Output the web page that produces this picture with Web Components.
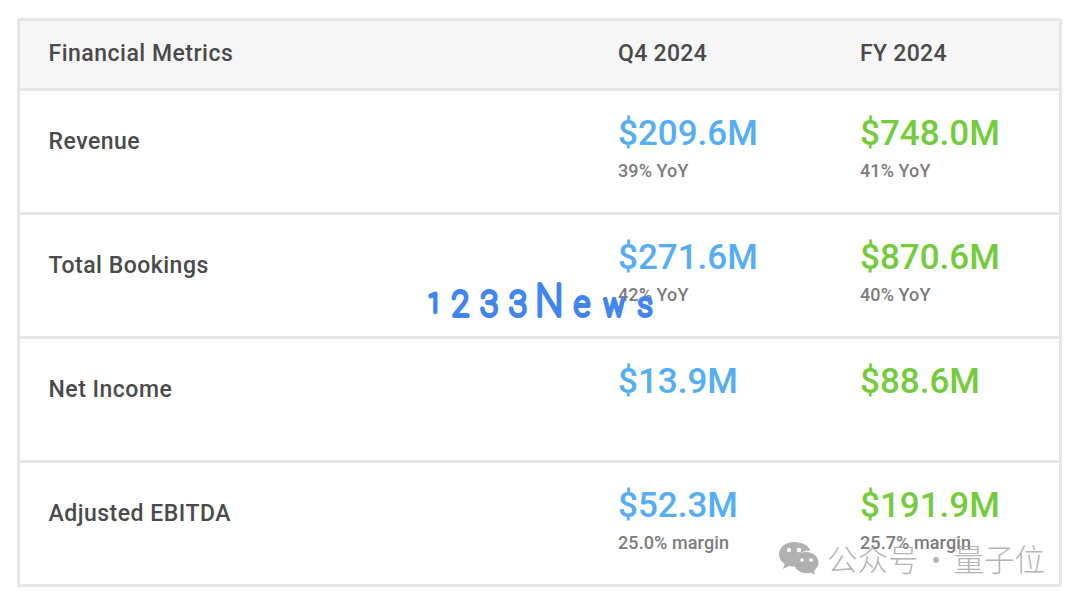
<!DOCTYPE html>
<html>
<head>
<meta charset="utf-8">
<title>Financial Metrics</title>
<style>
  html, body { margin: 0; background: #fff; }
  body { width: 1080px; height: 602px; overflow: hidden; position: relative; font-family: Roboto, "Liberation Sans", sans-serif; }
</style>
</head>
<body>
<metrics-table>
  <metric-row header label="Financial Metrics" q="Q4 2024" fy="FY 2024"></metric-row>
  <metric-row label="Revenue" q="$209.6M" qsub="39% YoY" fy="$748.0M" fysub="41% YoY"></metric-row>
  <metric-row label="Total Bookings" q="$271.6M" qsub="42% YoY" fy="$870.6M" fysub="40% YoY"></metric-row>
  <metric-row label="Net Income" q="$13.9M" fy="$88.6M"></metric-row>
  <metric-row last label="Adjusted EBITDA" q="$52.3M" qsub="25.0% margin" fy="$191.9M" fysub="25.7% margin"></metric-row>
</metrics-table>
<news-mark></news-mark>
<wechat-mark></wechat-mark>

<script>
class MetricsTable extends HTMLElement {
  constructor() {
    super();
    this.attachShadow({ mode: 'open' });
  }
  connectedCallback() {
    this.shadowRoot.innerHTML = `
      <style>
        :host { display: block; margin: 18px 0 0 17px; border: 3px solid #e6e6e6; border-radius: 2px; width: 1039px; }
      </style>
      <slot></slot>
    `;
  }
}

class MetricRow extends HTMLElement {
  constructor() {
    super();
    this.attachShadow({ mode: 'open' });
  }
  connectedCallback() {
    const a = (n) => this.getAttribute(n) || '';
    const isHead = this.hasAttribute('header');
    const cell = (val, sub, cls) => isHead
      ? `<div class="head">${val}</div>`
      : `<div class="val ${cls}">${val}</div>${sub ? `<div class="sub">${sub}</div>` : ''}`;
    this.shadowRoot.innerHTML = `
      <style>
        :host {
          display: grid; grid-template-columns: 570px 242px 1fr;
          height: 121px;
          border-bottom: 3px solid #e6e6e6;
          color: #4a4a4a;
        }
        :host([header]) { height: 67px; background: #f6f6f6; }
        :host([last]) { border-bottom: 0; }
        .c { padding-left: 28px; }
        .label { font-size: 23px; font-weight: 500; letter-spacing: .5px; padding-top: 37px; line-height: 28px; padding-left: 28.5px; }
        .head { font-size: 23px; font-weight: 500; letter-spacing: .3px; line-height: 28px; padding-top: 19px; }
        :host([header]) .label { padding-top: 19px; }
        .val { font-size: 35px; font-weight: 500; line-height: 42px; margin-top: 22px; }
        .blue { color: #55aef5; }
        .green { color: #74cc3c; }
        .sub { font-size: 18px; font-weight: 500; letter-spacing: .1px; line-height: 22px; margin-top: 5px; color: #7c7c7c; }
      </style>
      <div class="c label">${a('label')}</div>
      <div class="c">${cell(a('q'), a('qsub'), 'blue')}</div>
      <div class="c">${cell(a('fy'), a('fysub'), 'green')}</div>
    `;
  }
}

class NewsMark extends HTMLElement {
  constructor() {
    super();
    this.attachShadow({ mode: 'open' });
  }
  connectedCallback() {
    // x values are divided by the .9 squeeze on the group
    this.shadowRoot.innerHTML = `
      <style>
        :host { position: absolute; left: 420px; top: 276px; display: block; width: 245px; height: 50px; }
        svg { display: block; overflow: visible; }
        text { font-family: Roboto, sans-serif; font-weight: 100; fill: #3f86f4; stroke: #3f86f4; stroke-width: 4px; stroke-linejoin: round; stroke-linecap: round; }
      </style>
      <svg width="245" height="50" viewBox="0 0 245 50">
        <g transform="scale(.9 1)">
          <text><tspan x="9" y="36" font-size="26">1</tspan><tspan x="35" y="40" font-size="36">2</tspan><tspan x="67" y="40" font-size="36">3</tspan><tspan x="99" y="40" font-size="36">3</tspan><tspan x="128" y="40" font-size="44">N</tspan><tspan x="171" y="40" font-size="35">e</tspan><tspan x="204" y="40" font-size="31">w</tspan><tspan x="242" y="40" font-size="33">s</tspan></text>
        </g>
      </svg>
    `;
  }
}

class WechatMark extends HTMLElement {
  constructor() {
    super();
    this.attachShadow({ mode: 'open' });
  }
  connectedCallback() {
    this.shadowRoot.innerHTML = `
      <style>
        :host { position: absolute; left: 778px; top: 538px; display: flex; align-items: center; gap: 8px; height: 40px;
          color: rgba(160,160,160,.8); font-family: "Noto Sans CJK SC", sans-serif; font-size: 30.5px; font-weight: 300; white-space: nowrap; }
        svg { display: block; }
        .dot { display: inline-block; width: 35px; text-align: center; font-weight: 300; }
      </style>
      <svg width="41" height="36" viewBox="0 0 41 36">
        <path fill="#b0b0b0" d="M16 2C7.700 2 1 7.500 1 14.300c0 3.900 2.200 7.300 5.700 9.600L5 29l6-3.100c1.600.5 3.300.8 5 .8.500 0 1 0 1.500-.1-.4-1.200-.6-2.400-.6-3.700 0-7 6.300-12.500 14.400-12.500.4 0 .8 0 1.200.1C30.600 5.500 23.900 2 16 2z"/>
        <path fill="#b0b0b0" d="M40.500 22.600c0-5.900-5.600-10.600-12.200-10.600-7 0-12.300 4.700-12.300 10.600s5.300 10.600 12.300 10.600c1.400 0 2.800-.2 4.100-.6l4.700 2.500-1.300-4.200c2.900-2.100 4.700-5 4.700-8.300z"/>
        <circle cx="11" cy="10" r="2.200" fill="#fff"/><circle cx="21" cy="10" r="2.200" fill="#fff"/>
        <circle cx="24" cy="20" r="1.800" fill="#fff"/><circle cx="33" cy="20" r="1.800" fill="#fff"/>
      </svg>
      <span>公众号<span class="dot">·</span>量子位</span>
    `;
  }
}

customElements.define('metrics-table', MetricsTable);
customElements.define('metric-row', MetricRow);
customElements.define('news-mark', NewsMark);
customElements.define('wechat-mark', WechatMark);
</script>
</body>
</html>
